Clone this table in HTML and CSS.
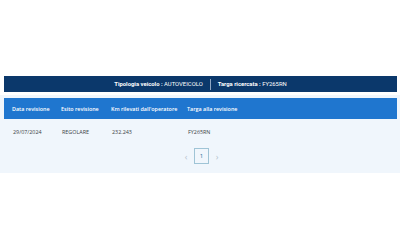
FILE: index.html
```html
<!DOCTYPE html>
<html>
<head>
<meta charset="utf-8">
<link rel="stylesheet" href="styles.css">
</head>
<body>
<div class="page">
  <div class="info-bar">
    <span class="info"><b>Tipologia veicolo :</b> AUTOVEICOLO</span>
    <span class="sep"></span>
    <span class="info"><b>Targa ricercata :</b> FY265RN</span>
  </div>
  <div class="panel">
    <div class="thead">
      <div class="cell">Data revisione</div>
      <div class="cell">Esito revisione</div>
      <div class="cell">Km rilevati dall'operatore</div>
      <div class="cell">Targa alla revisione</div>
    </div>
    <div class="trow">
      <div class="cell">29/07/2024</div>
      <div class="cell">REGOLARE</div>
      <div class="cell">232.243</div>
      <div class="cell">FY265RN</div>
    </div>
    <div class="pager">
      <span class="arrow">&#8249;</span>
      <span class="page-num">1</span>
      <span class="arrow">&#8250;</span>
    </div>
  </div>
</div>
</body>
</html>
```
FILE: styles.css
```css
html, body { margin: 0; padding: 0; background: #fff; }
body { font-family: "Open Sans", "Liberation Sans", sans-serif; width: 400px; height: 250px; overflow: hidden; }
.page { padding-top: 76px; }
.info-bar {
  margin: 0 3px 0 4px;
  height: 16px;
  background: #0b386b;
  color: #fff;
  font-family: Roboto, "Open Sans", sans-serif;
  font-size: 5.9px;
  display: flex;
  align-items: center;
  justify-content: center;
  gap: 7px;
}
.info b { font-weight: 700; }
.sep { width: 1px; height: 11px; background: #8fa6c2; }
.panel {
  margin-top: 3px;
  background: #f0f6fc;
  padding: 3px 0 9px;
}
.thead, .trow {
  display: grid;
  grid-template-columns: 49px 50px 76px 1fr;
  margin: 0 3px 0 4px;
  padding-left: 8px;
  font-size: 5.4px;
  align-items: center;
}
.thead { background: #1f76cf; color: #fff; height: 21px; font-weight: 600; }
.trow { height: 26px; color: #3a3f45; }
.trow .cell { padding-left: 1px; }
.pager {
  display: flex;
  justify-content: center;
  align-items: center;
  gap: 5px;
  margin-top: 3px;
  padding-left: 3px;
}
.arrow { color: #b7c3cc; font-size: 9px; width: 6px; text-align: center; }
.page-num {
  width: 15px; height: 16px;
  border: 1px solid #9fc4d6;
  box-sizing: border-box;
  display: flex; align-items: center; justify-content: center;
  font-size: 6px; color: #2f6e9a;
}
```
